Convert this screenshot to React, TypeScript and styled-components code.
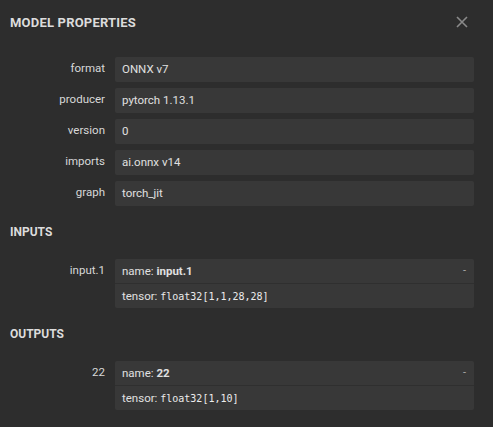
import React from "react";
import styled, { createGlobalStyle } from "styled-components";

const Global = createGlobalStyle`
  html, body { margin: 0; padding: 0; background: #2d2d2d; }
  body { font-family: Roboto, "Noto Sans", sans-serif; color: #dfdfdf; }
`;

const Sidebar = styled.div`
  width: 493px;
  height: 427px;
  background: #2d2d2d;
  box-sizing: border-box;
  overflow: hidden;
`;

const Header = styled.div`
  height: 44px;
  display: flex;
  align-items: center;
  justify-content: space-between;
  padding: 0 25px 0 10px;
`;

const Title = styled.div`
  font-size: 13px;
  font-weight: 700;
  color: #dcdcdc;
  letter-spacing: 0.2px;
`;

const Close = styled.button`
  background: none;
  border: none;
  padding: 0;
  width: 12px;
  height: 12px;
  display: flex;
  cursor: pointer;
`;

const Content = styled.div`
  padding: 13px 19px 0 10px;
`;

const Section = styled.div`
  display: flex;
  flex-direction: column;
  gap: 6px;
`;

const Heading = styled.div`
  font-size: 12px;
  font-weight: 700;
  line-height: 16px;
  color: #dcdcdc;
  margin: 18px 0 19px;
`;

const Row = styled.div`
  display: grid;
  grid-template-columns: 95px 1fr;
  column-gap: 10px;
  align-items: start;
`;

const Label = styled.div`
  text-align: right;
  font-size: 11.5px;
  line-height: 22px;
  color: #d8d8d8;
`;

const Value = styled.div`
  background: #383838;
  border-radius: 2px;
  height: 25px;
  line-height: 25px;
  padding: 0 7px;
  font-size: 11.5px;
  color: #e0e0e0;
`;

const Box = styled.div`
  background: #383838;
  border-radius: 2px;
  display: flex;
  flex-direction: column;
`;

const BoxLine = styled.div<{ $divider?: boolean }>`
  height: 24px;
  line-height: 24px;
  padding: 0 7px;
  font-size: 11.5px;
  color: #e0e0e0;
  display: flex;
  justify-content: space-between;
  border-top: ${(p) => (p.$divider ? "1px solid #2f2f2f" : "none")};
`;

const Strong = styled.b`
  font-weight: 700;
`;

const Code = styled.code`
  font-family: "DejaVu Sans Mono", "Liberation Mono", monospace;
  font-size: 10px;
  color: #ececec;
`;

const Toggle = styled.span`
  color: #aaaaaa;
  font-size: 11px;
  padding-right: 1px;
`;

const props = [
  ["format", "ONNX v7"],
  ["producer", "pytorch 1.13.1"],
  ["version", "0"],
  ["imports", "ai.onnx v14"],
  ["graph", "torch_jit"],
];

const Arg = ({ label, name, type }: { label: string; name: string; type: string }) => (
  <Row>
    <Label>{label}</Label>
    <Box>
      <BoxLine>
        <span>
          name: <Strong>{name}</Strong>
        </span>
        <Toggle>-</Toggle>
      </BoxLine>
      <BoxLine $divider>
        <span>
          tensor: <Code>{type}</Code>
        </span>
      </BoxLine>
    </Box>
  </Row>
);

export default function App() {
  return (
    <Sidebar>
      <Global />
      <Header>
        <Title>MODEL PROPERTIES</Title>
        <Close aria-label="close">
          <svg width="12" height="12" viewBox="0 0 12 12">
            <path d="M1 1L11 11M11 1L1 11" stroke="#8a8a8a" strokeWidth="1.6" />
          </svg>
        </Close>
      </Header>
      <Content>
        <Section>
          {props.map(([k, v]) => (
            <Row key={k}>
              <Label>{k}</Label>
              <Value>{v}</Value>
            </Row>
          ))}
        </Section>
        <Heading>INPUTS</Heading>
        <Section>
          <Arg label="input.1" name="input.1" type="float32[1,1,28,28]" />
        </Section>
        <Heading>OUTPUTS</Heading>
        <Section>
          <Arg label="22" name="22" type="float32[1,10]" />
        </Section>
      </Content>
    </Sidebar>
  );
}
